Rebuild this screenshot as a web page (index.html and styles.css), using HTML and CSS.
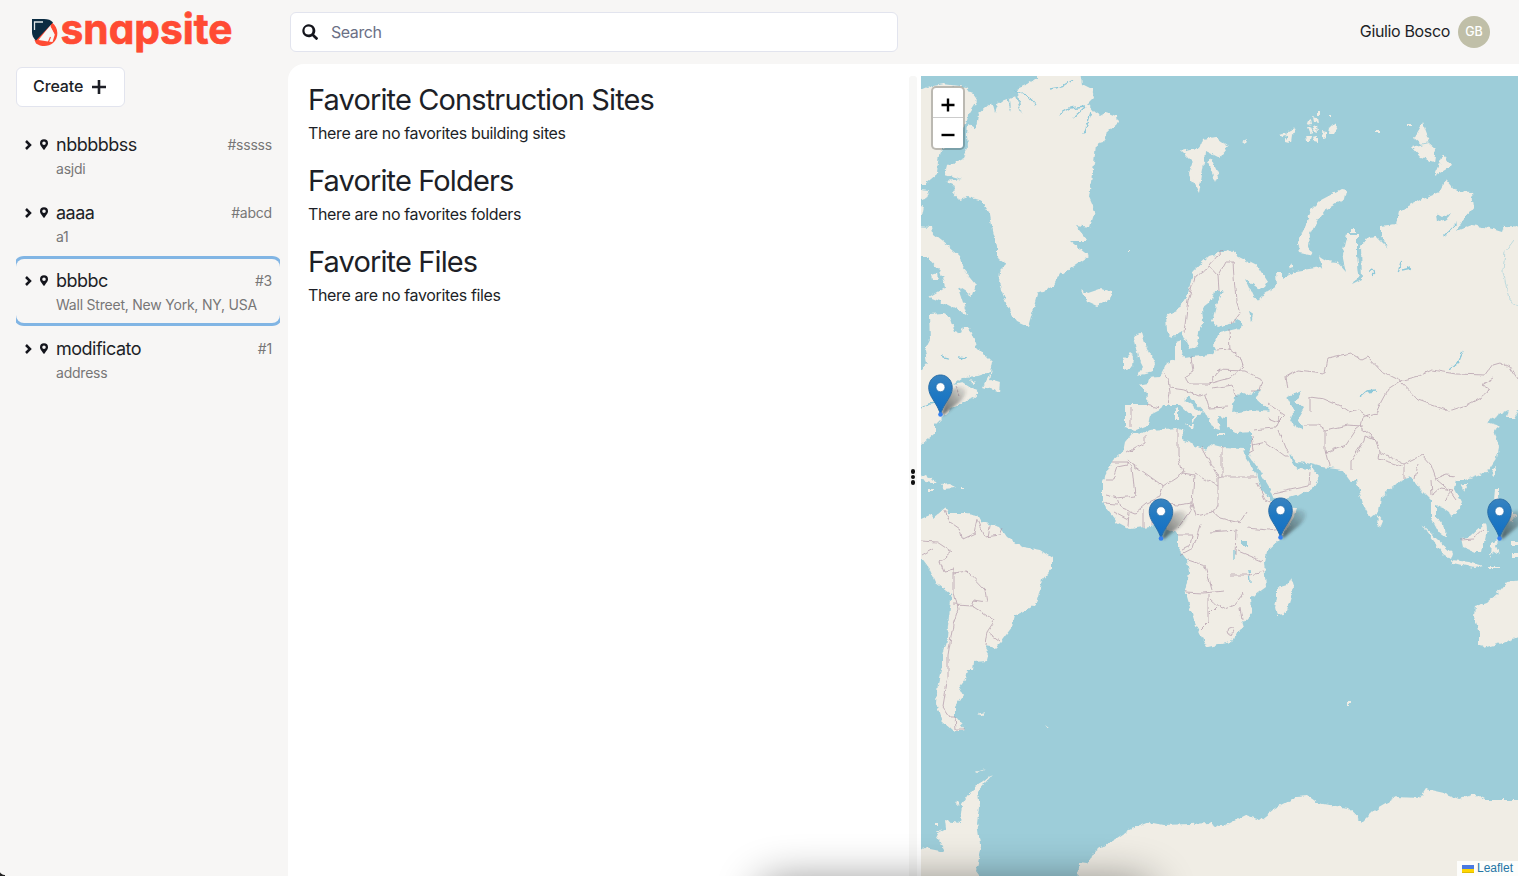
FILE: index.html
```html
<!DOCTYPE html>
<html lang="en">
<head>
<meta charset="utf-8">
<title>Snapsite</title>
<link rel="stylesheet" href="styles.css">
</head>
<body>
<svg class="defs" width="0" height="0" aria-hidden="true">
  <symbol id="chevron" viewBox="0 0 8 10"><path d="M2 1 6 5 2 9" fill="none" stroke="currentColor" stroke-width="2.500"/></symbol>
  <symbol id="place" viewBox="0 0 384 512"><path fill="currentColor" d="M172 502C27 291 0 270 0 192a192 192 0 0 1 384 0c0 78-27 99-172 310-10 13-30 13-40 0zm20-225a85 85 0 1 0 0-170 85 85 0 0 0 0 170z"/></symbol>
</svg>
<header class="topbar">
  <div class="brand">
    <svg class="logo" viewBox="0 0 202 42" role="img" aria-label="snapsite">
      <path fill="#ff4b33" d="M20 10.500c7 5.500 7 15.500 1 20.500-4.500 4-12 4-17 .5L2.500 28z"/>
      <path fill="#f7f6f5" d="M18.500 13 23 22l-2.500 8-4.500-.5L6.500 28z"/>
      <path fill="none" stroke="#ff4b33" stroke-width="1.200" d="m16 31 2.500-6M19 14l5 9.500"/>
      <path fill="#0b2c42" d="M0 7h12c4 0 7 1 9 3.500L4 28.500C1 26 0 23 0 20z"/>
      <path fill="none" stroke="#dfe6e8" stroke-width="1.300" d="M2.500 18V10h8.500"/>
      <text x="28.500" y="32" textLength="172" lengthAdjust="spacingAndGlyphs">snapsite</text>
    </svg>
  </div>
  <label class="search">
    <svg viewBox="0 0 512 512"><path fill="currentColor" d="M505 443 405 343a16 16 0 0 0-17-4.700 208 208 0 1 0-49 49c-1 6 .5 13 5 17l100 100c9 9 25 9 34 0l27-28c9-9 9-24 0-33zM208 336a128 128 0 1 1 0-256 128 128 0 0 1 0 256z"/></svg>
    <span>Search</span>
  </label>
  <div class="user"><span class="user-name">Giulio Bosco</span><span class="avatar">GB</span></div>
</header>
<div class="body">
  <aside class="sidebar">
    <button class="create"><span>Create</span><svg viewBox="0 0 14 14"><path d="M7 0v14M0 7h14" stroke="currentColor" stroke-width="2.600"/></svg></button>
    <ul class="sites">
      <li class="site"><svg class="chev"><use href="#chevron"/></svg><svg class="place"><use href="#place"/></svg><span class="name">nbbbbbss</span><span class="code">#sssss</span><span class="addr">asjdi</span></li>
      <li class="site"><svg class="chev"><use href="#chevron"/></svg><svg class="place"><use href="#place"/></svg><span class="name">aaaa</span><span class="code">#abcd</span><span class="addr">a1</span></li>
      <li class="site selected"><svg class="chev"><use href="#chevron"/></svg><svg class="place"><use href="#place"/></svg><span class="name">bbbbc</span><span class="code">#3</span><span class="addr">Wall Street, New York, NY, USA</span></li>
      <li class="site"><svg class="chev"><use href="#chevron"/></svg><svg class="place"><use href="#place"/></svg><span class="name">modificato</span><span class="code">#1</span><span class="addr">address</span></li>
    </ul>
  </aside>
  <main class="panel">
    <div class="favorites">
      <section><h2>Favorite Construction Sites</h2><p>There are no favorites building sites</p></section>
      <section><h2>Favorite Folders</h2><p>There are no favorites folders</p></section>
      <section><h2>Favorite Files</h2><p>There are no favorites files</p></section>
    </div>
    <div class="splitter"><i></i><i></i><i></i></div>
    <div class="map">
      <svg class="world" viewBox="921 76 597 800">
        <defs>
          <filter id="coast" filterUnits="userSpaceOnUse" x="900" y="60" width="640" height="830"><feTurbulence type="fractalNoise" baseFrequency=".16" numOctaves="3" seed="4"/><feDisplacementMap in="SourceGraphic" scale="5.500" xChannelSelector="R" yChannelSelector="G"/></filter>
          <filter id="border" filterUnits="userSpaceOnUse" x="900" y="60" width="640" height="830"><feTurbulence type="fractalNoise" baseFrequency=".12" numOctaves="2" seed="9"/><feDisplacementMap in="SourceGraphic" scale="5" xChannelSelector="R" yChannelSelector="G"/></filter>
          <filter id="soft" x="-50%" y="-50%" width="200%" height="200%"><feGaussianBlur stdDeviation="1.800"/></filter>
          <linearGradient id="pinfill" x1="0" y1="0" x2="0" y2="1"><stop offset="0" stop-color="#3883c0"/><stop offset=".45" stop-color="#2079c2"/><stop offset="1" stop-color="#126fc6"/></linearGradient>
          <linearGradient id="shade" x1="0" y1="1" x2="1" y2="0"><stop offset="0" stop-color="#2d3436" stop-opacity=".75"/><stop offset=".5" stop-color="#2d3436" stop-opacity=".42"/><stop offset="1" stop-color="#2d3436" stop-opacity=".05"/></linearGradient>
          <g id="pin">
            <path d="M1-1 6-20c4-8 13-10 18-7 4 3 0 10-6 15L3 0z" fill="url(#shade)" filter="url(#soft)"/>
            <path d="M0-.5C-2.500-9-7-14-9.800-19.500-15-30-9-40 0-40S15-30 9.800-19.500C7-14 2.500-9 0-.5z" fill="url(#pinfill)" stroke="#2a6ea7" stroke-width="1"/>
            <circle cy="-27.800" r="4.500" fill="#fff" stroke="#2a6ea7" stroke-width=".7"/>
            <circle cy="-.5" r="2.300" fill="#3480f0"/>
          </g>
        </defs>
        <rect class="water" x="921" y="76" width="598" height="800"/>
        <g class="land" filter="url(#coast)">
          <path d="M968 124 976 129 978 114 992 102 995 113 999 102 1007 99 1011 111 1010 98 1015 96 1022 114 1017 89 1028 84 1038 77V66H1079L1082 84 1092 89 1094 97 1087 104 1094 112 1100 116 1107 112 1117 116 1118 122 1107 132 1103 142 1096 144 1094 164 1091 181 1089 197 1095 211 1090 227 1075 225 1088 241 1070 241 1089 256 1077 264 1063 274 1060 272 1053 286 1043 292 1037 294 1033 309 1028 327 1017 322 1010 312 1004 297 999 284 1000 271 1007 264 997 258 997 246 993 231 990 214 982 201 968 197 960 200 952 191 955 186 945 181 962 179 945 174 947 166 963 158 968 147 967 136z"/>
          <path d="M910 94 927 87 943 84 967 87 977 101 967 117 963 131 953 146 940 150 938 161 937 174 925 184 910 184zM910 189 930 191 925 199 910 203zM910 207 924 206 922 216 910 215zM910 226 932 227 933 234 942 241 960 256 962 267 976 284 972 296 958 287 967 315 950 306 940 301 929 297 945 287 940 271 927 257 910 257zM931 274l6-2 1 8-6 0z"/>
          <path d="M929 314 943 313 950 317 955 332 960 334 963 327 968 327 976 343 977 347 992 362 990 372 978 376 963 377 953 385 962 383 970 388 980 392 973 398 963 402 950 410 944 416 935 425 935 433 921 445H905V370L921 370 927 363 925 350 930 340zM992 370 990 379 1000 382 999 392 983 387zM970 380 976 382 973 384z"/>
          <path d="M905 475 921 474 938 482 930 482 918 479zM941 485 950 484 956 488 944 489zM928 489h6v2h-6zM960 488h5v2h-5z"/>
          <path d="M905 517 921 519 930 515 933 518 945 508 948 513 967 513 978 515 982 522 1000 527 1007 537 1023 547 1040 550 1052 558 1052 568 1042 580 1038 597 1036 603 1030 608 1015 615 1012 627 1000 643 995 648 985 646 989 653 987 661 974 662 973 670 967 670 965 680 959 688 963 695 955 707 955 717 965 729 953 732 942 722 936 703 938 683 942 667 942 655 947 637 949 617 951 600 950 593 935 582 927 565 921 557 905 540z"/>
          <path d="M1133 432 1142 434 1150 430 1177 428 1182 430 1183 440 1200 448 1207 450 1210 444 1222 447 1244 448 1246 457 1256 473 1260 487 1272 502 1274 507 1296 508 1294 517 1281 538 1266 552 1264 563 1266 587 1251 598 1252 613 1244 623 1231 642 1209 647 1207 647 1203 640 1195 623 1188 600 1185 590 1189 573 1187 560 1178 548 1178 533 1167 530 1162 523 1150 526 1130 529 1117 522 1105 507 1103 500 1103 480 1113 460 1123 452 1125 442zM1291 577 1294 587 1287 610 1284 615 1277 616 1275 607 1277 597 1277 588 1287 585z"/>
          <path d="M1172 338 1182 331 1186 340 1190 348 1197 345 1199 332 1203 322 1202 308 1212 300 1214 291 1223 291 1216 306 1212 322 1218 327 1240 321 1255 330 1275 310 1253 297 1245 279 1258 288 1264 289 1268 281 1259 267 1239 257 1229 250 1209 256 1193 271 1188 294 1177 311 1166 316 1167 331z"/>
          <path d="M1125 405 1147 405 1148 393 1138 385 1148 383 1149 378 1160 377 1167 363 1175 360 1175 343 1181 341 1181 353 1184 358 1210 355 1217 350 1214 344 1219 333 1240 328 1242 314 1254 310 1250 297 1259 302 1264 294 1277 286 1276 272 1282 272 1282 279 1296 271 1322 267 1319 257 1326 261 1337 262 1346 272 1342 254 1347 234 1357 234 1357 254 1359 275 1352 285 1362 280 1361 246 1369 237 1376 236 1389 249 1381 236 1381 226 1396 224 1399 211 1422 199 1439 192 1446 179 1456 191 1472 192 1474 207 1462 222 1456 231 1472 225 1489 228 1502 232 1504 226 1535 227V408L1518 411 1514 418 1506 418 1508 410 1499 415 1487 422 1500 426 1494 430 1499 447 1497 457 1487 472 1466 480 1456 480 1454 487 1462 503 1457 512 1451 517 1449 512 1442 507 1436 505 1436 517 1446 530 1447 538 1439 532 1431 517 1431 500 1421 490 1412 477 1401 480 1381 497 1379 512 1371 519 1364 507 1358 487 1357 478 1351 482 1342 470 1322 467 1307 463 1297 462 1289 452 1292 463 1300 469 1309 470 1311 465 1320 477 1312 488 1299 495 1276 502 1271 490 1259 470 1249 455 1252 440 1252 432 1237 433 1227 427 1227 418 1218 417 1220 430 1213 428 1206 414 1190 397 1184 400 1203 413 1196 416 1193 424 1193 417 1180 405 1163 405 1160 410 1150 415 1148 425 1135 430 1125 427z"/>
          <path d="M1133 337 1142 333 1145 343 1155 363 1153 372 1137 376 1143 367 1138 357zM1130 353 1134 356 1133 367 1123 370 1123 360zM1082 289 1088 293 1100 289 1112 291 1110 299 1098 306 1087 301zM1186 424l8 0-1 5zM1175 410l3-2v12h-3zM1216 433h9v2h-9z"/>
          <path d="M1181 151 1190 149 1200 148 1203 139 1215 137 1228 146 1219 158 1205 151 1204 163 1199 193 1189 174 1193 163zM1211 158 1219 176 1216 183 1208 163z"/>
          <path d="M1341 189 1347 190 1345 199 1325 210 1315 224 1309 236 1308 247 1314 255 1300 252 1297 243 1306 225 1311 209 1320 200zM1319 256 1325 263 1322 265z"/>
          <path d="M1423 123 1430 142 1421 144 1414 138zM1411 147 1429 143 1436 149 1434 162 1421 158zM1443 154 1451 166 1434 176z"/>
          <path d="M1280 134l6-2 1 4-5 1zM1288 131l6-3 2 5-4 2-1 7-3-2zM1285 138l3 1 1 4-4-1zM1306 122l5-3 1 5-4 1zM1313 117l4 1 1 5-4-1zM1307 128l4-1 2 5-4 1zM1313 127l4-1 1 6-3-1zM1306 135l6 0-1 6-4 0zM1313 137l5-1 0 7-4-1zM1321 131l6 1 0 5-5 1zM1330 128l5-5 2 5-3 5-5 0zM1317 112h3v3h-3zM1329 115h3v2h-3zM1375 131h4v2h-4zM1407 125h5v2h-5zM1242 142l4-2-1 4zM1289 266l4-2 0 4-3 1zM1351 229h4v3h-4z"/>
          <path d="M1422 525 1437 539 1453 554 1451 560 1443 555 1435 543zM1452 560 1469 562 1483 566 1475 568 1453 563zM1461 538 1470 537 1486 522 1487 530 1482 552 1475 552 1463 547zM1491 543 1500 538 1496 545 1500 555 1494 551 1490 558zM1488 566h13v2h-13zM1495 488h4v11l9 4-3 5-11-6zM1508 509l9 6-5 7-6-7zM1493 469l4-2-2 10-3-3zM1460 484h7l-3 6zM1378 515l5 6-2 5-4-2zM1511 542h12v3h-12zM1512 554h10v3h-10z"/>
          <path d="M1475 606 1487 602 1497 594 1507 582 1530 579V638L1518 637 1502 643 1484 648 1479 645 1479 632 1474 617z"/>
          <path d="M905 855 925 848 945 852 936 835 946 829 945 820 960 822 962 805 972 790 992 775 977 792 979 806 977 823 981 850 976 871 990 890H905zM934 823h5v2h-5zM935 832l8-3-6 4zM976 772l10-3-8 4zM957 801l3 3-4 2z"/>
          <path d="M1078 895 1079 863 1087 864 1096 850 1117 838 1129 830 1149 822 1164 825 1190 824 1209 823 1222 827 1246 815 1260 820 1275 808 1296 797 1308 796 1318 803 1348 808 1363 822 1377 808 1396 797 1420 798 1426 789 1444 793 1459 799 1474 794 1486 800 1535 800V900z"/>
          <path d="M978 714l7-2-2 4zM1045 725l5 4-2 0zM1347 702h4v3h-4zM1128 250h2v1h-2z"/>
        </g>
        <g class="lakes" filter="url(#coast)">
          <path d="M1234 397 1241 392 1247 395 1261 390 1256 398 1271 412 1252 410 1232 413zM1287 397 1301 390 1299 398 1295 401 1304 408 1298 418 1304 428 1296 429 1291 420 1294 412zM1241 541h7v6h-7zM1233 319l7 2 3 5-5-1zM1249 310l4 6-2 6zM1436 213l7 4 8-4-4 6-10 3z"/>
          <path class="inlet" d="M1463 351 1459 361 1449 370M1361 396 1366 392 1376 391M1059 114 1070 108 1085 106M1073 118 1085 107M1084 134 1091 113M1050 89 1062 87 1073 80M1014 90l14 6 8 9M1235 550 1235 560M1249 570 1250 582M921 408l9-4 9-1M1398 272l4-12M1402 270l9-2M1458 222l-14 15M1370 270q5 0 3 7M940 356l8 2M958 357l8 1"/>
          <path class="river" d="M1514 240l-9 12-2 18 6 30 9 6"/>
        </g>
        <g class="borders" filter="url(#border)">
          <path d="M1222 250 1206 270 1195 277 1188 300 1184 332M1209 265 1218 275 1219 290M1219 275 1226 262 1233 262 1234 277 1236 300 1240 312 1231 324M1147 405 1160 408M1131 407 1131 427M1163 372 1168 380 1170 392 1168 405M1191 356 1193 372 1185 376 1190 384 1209 384M1170 388 1185 390 1200 396 1208 393M1209 384 1230 378 1243 366 1240 357 1230 349 1217 350M1210 385 1220 368 1217 370 1245 371 1263 380 1260 390 1251 390M1229 330 1230 350M1212 388 1232 385 1236 397M1205 395 1209 408 1228 407M1268 404 1285 415 1278 422 1268 418"/>
          <path d="M1287 388 1285 377 1297 370 1325 373 1328 358 1350 353 1362 360 1368 357 1382 372 1400 381 1419 376 1432 370 1456 374 1485 375 1493 364 1500 362 1510 367 1517 378M1400 381 1418 400 1449 411 1467 405 1482 397 1490 390 1481 385 1493 378M1400 381 1388 389 1381 402 1376 413 1362 417 1360 427 1375 439 1380 452 1404 464 1422 455 1431 465 1436 479 1447 475 1455 476M1310 412 1310 397 1324 399 1340 406 1350 413 1359 410 1371 419M1304 425 1318 425 1325 430 1347 425 1362 426M1325 430 1325 450 1329 466M1325 453 1345 445 1355 430 1360 426M1351 470 1351 461 1364 441 1365 435 1375 439M1380 452 1379 459 1402 466M1404 464 1404 479M1415 479 1418 464M1431 480 1432 495 1440 488 1453 490 1444 500M1437 480 1449 490 1456 500"/>
          <path d="M1253 430 1275 428 1280 417M1278 430 1285 448 1289 453M1253 445 1266 442 1285 456 1289 456M1273 494 1290 490 1309 486 1310 471M1249 453 1254 450 1252 436M1222 447 1222 477 1257 477M1222 477 1218 478 1218 505 1214 513M1202 447 1218 477M1178 430 1178 455 1183 473 1163 486 1127 460M1127 453 1145 443 1145 435M1127 462 1113 462M1127 462 1127 465 1117 467 1113 479 1104 479M1127 462 1132 468 1135 496 1117 498 1105 495M1117 498 1120 507 1135 513 1147 503 1160 497 1163 486M1129 512 1128 527M1143 509 1143 527M1152 510 1152 525M1160 503 1178 505 1192 503M1183 473 1194 475 1192 505 1187 515 1178 528M1192 505 1195 515 1213 512 1220 518 1240 523 1247 512M1194 473 1218 486M1257 483 1265 500 1280 507M1247 528 1268 530 1280 528M1200 525 1193 548 1180 555M1187 559 1205 565 1212 590M1185 592 1203 593 1224 591M1208 594 1208 622 1200 630M1210 598 1222 609 1235 604 1244 592M1238 551 1262 561M1230 575 1250 575 1265 572M1210 532 1237 530 1236 555M1105 503 1117 504M1113 511l15 8M1178 535h14l-2 11-8 4M1217 607l-8 8M1240 607l2 13"/>
          <path d="M945 510 950 522 960 529 962 539 975 533 978 519M921 541 937 542 952 552 940 562 944 572 954 570 954 592 958 609 953 625 948 655 948 677 943 707 950 717 955 717 956 729 965 729M921 556 933 549M978 520 985 537 1000 535 1003 528M990 526 988 537M954 573 967 571 985 590 987 602 974 600 972 606 988 616 995 620 987 632 985 645M988 632 1000 641M953 605 973 606M955 386l5 10"/>
          <ellipse cx="1231" cy="630" rx="3" ry="3.500"/><path d="M1461 540 1473 539 1484 529M1517 607h2"/>
        </g>
        <use href="#pin" x="940.500" y="415"/><use href="#pin" x="1161" y="539"/><use href="#pin" x="1280.500" y="538"/><use href="#pin" x="1499.500" y="539"/>
      </svg>
      <div class="zoom-control"><span><svg viewBox="0 0 14 14"><path d="M7 .5v13M.5 7h13" stroke="#000" stroke-width="2.400"/></svg></span><span><svg viewBox="0 0 14 14"><path d="M.5 7h13" stroke="#000" stroke-width="2.400"/></svg></span></div>
      <div class="attribution"><svg viewBox="0 0 12 8"><path fill="#4c7be1" d="M0 0h12v4H0z"/><path fill="#ffd500" d="M0 4h12v3H0z"/><path fill="#e0bc00" d="M0 7h12v1H0z"/></svg><span>Leaflet</span></div>
    </div>
  </main>
</div>
<div class="dock-shadow"></div>
<div class="corner"></div>
</body>
</html>
```
FILE: styles.css
```css
* { box-sizing: border-box; }
body { margin: 0; height: 876px; overflow: hidden; background: #f7f6f5; color: #1d1f27; font: 16px/24px Inter, "Liberation Sans", sans-serif; display: flex; flex-direction: column; position: relative; }
h2, p, ul { margin: 0; padding: 0; font-weight: 400; }
.defs { position: absolute; }
.topbar { height: 64px; display: flex; align-items: center; flex: none; padding-right: 29px; }
.brand { width: 290px; padding-left: 32px; height: 42px; margin-top: 1px; }
.logo { width: 202px; height: 42px; display: block; overflow: visible; }
.logo text { font: 750 42px Inter, sans-serif; font-feature-settings: "cv11"; fill: #ff4b33; stroke: #ff4b33; stroke-width: .7px; }
.search { width: 608px; height: 40px; border: 1px solid #e2e4ee; border-radius: 6px; background: #fff; display: flex; align-items: center; padding-left: 11px; gap: 13px; color: #6b7085; }
.search svg { width: 16px; height: 16px; color: #14151c; }
.search span { letter-spacing: -.45px; }
.user { margin-left: auto; display: flex; align-items: center; gap: 8px; }
.user-name { letter-spacing: -.35px; padding-bottom: 2px; }
.avatar { width: 32px; height: 32px; border-radius: 50%; background: #c0bfa8; color: #fff; font-size: 12.500px; font-weight: 500; display: flex; align-items: center; justify-content: center; }
.body { flex: 1; display: flex; min-height: 0; }
.sidebar { width: 288px; padding: 3px 8px 0 16px; flex: none; }
.create { width: 109px; height: 40px; border: 1px solid #e2e4ee; border-radius: 6px; background: #fff; font: 550 16px/24px Inter, sans-serif; letter-spacing: -.1px; color: #1d1f27; display: flex; align-items: center; gap: 9px; padding: 0 16px; }
.create span { padding-bottom: 2px; }
.create svg { width: 14px; height: 14px; flex: none; }
.sites { list-style: none; margin-top: 14px; }
.site { height: 68px; padding: 10px 8px 8px; display: grid; grid-template-columns: 16px 16px auto 1fr; grid-template-rows: 27px 22px; align-items: center; clip-path: inset(-4px 0); }
.site.selected { border-radius: 8px; box-shadow: 0 0 0 3px #81b5e4; height: 64px; margin: 2px 0; padding-top: 8px; }
.chev { width: 8px; height: 10px; color: #14151c; }
.place { width: 8px; height: 11px; color: #14151c; }
.name { font-size: 18px; letter-spacing: -.5px; }
.code { font-size: 14px; color: #777; text-align: right; letter-spacing: -.2px; }
.addr { grid-column: 3 / 5; font-size: 14px; color: #777; letter-spacing: -.22px; }
.panel { flex: 1; background: #fff; border-top-left-radius: 16px; display: flex; padding: 12px 1px 0 20px; min-width: 0; }
.favorites { width: 601px; display: flex; flex-direction: column; gap: 12px; padding-top: 6px; }
.favorites section { height: 69px; }
.favorites h2 { font-size: 29px; line-height: 36px; letter-spacing: -.87px; }
.favorites p { line-height: 24px; margin-top: 3px; letter-spacing: -.35px; }
.splitter { width: 8px; margin-right: 4px; background: #f7f7f6; display: flex; flex-direction: column; align-items: center; justify-content: center; gap: 1px; padding-top: 2px; border-radius: 3px 3px 0 0; }
.splitter i { width: 4.500px; height: 4.500px; border-radius: 50%; background: #111; }
.map { flex: 1; position: relative; background: #9dcdd9; overflow: hidden; }
.world { display: block; width: 597px; height: 800px; }
.water { fill: #9dcdd9; }
.land { fill: #f0ede5; }
.lakes { fill: #9dcdd9; }
.inlet { fill: none; stroke: #8dc8d9; stroke-width: 1.300; }
.river { fill: none; stroke: #a9d2da; stroke-width: .7; }
.borders { fill: none; stroke: #a98fa2; stroke-width: .8; opacity: .8; }
.zoom-control { position: absolute; left: 10px; top: 10px; width: 34px; height: 64px; border: 2px solid rgba(0,0,0,.22); background: #fff; background-clip: padding-box; border-radius: 5px; display: flex; flex-direction: column; }
.zoom-control span { height: 30px; display: flex; align-items: center; justify-content: center; padding-top: 4px; }
.zoom-control span:first-child { border-bottom: 1px solid #ccc; }
.zoom-control svg { width: 14px; height: 14px; }
.attribution { position: absolute; right: 0; bottom: 0; width: 61px; height: 15px; background: rgba(255,255,255,.85); display: flex; align-items: center; gap: 3px; padding-left: 5px; color: #2475a5; font: 12px/15px "Liberation Sans", sans-serif; }
.attribution svg { width: 12px; height: 8px; }
.dock-shadow { position: absolute; left: 765px; top: 888px; width: 382px; height: 30px; border-radius: 12px; box-shadow: 0 0 44px 6px rgba(0,0,0,.48); }
.corner { position: absolute; left: 0; bottom: 0; width: 5px; height: 7px; background: radial-gradient(circle at 100% 0, transparent 5.500px, #222 6.500px); }
```
